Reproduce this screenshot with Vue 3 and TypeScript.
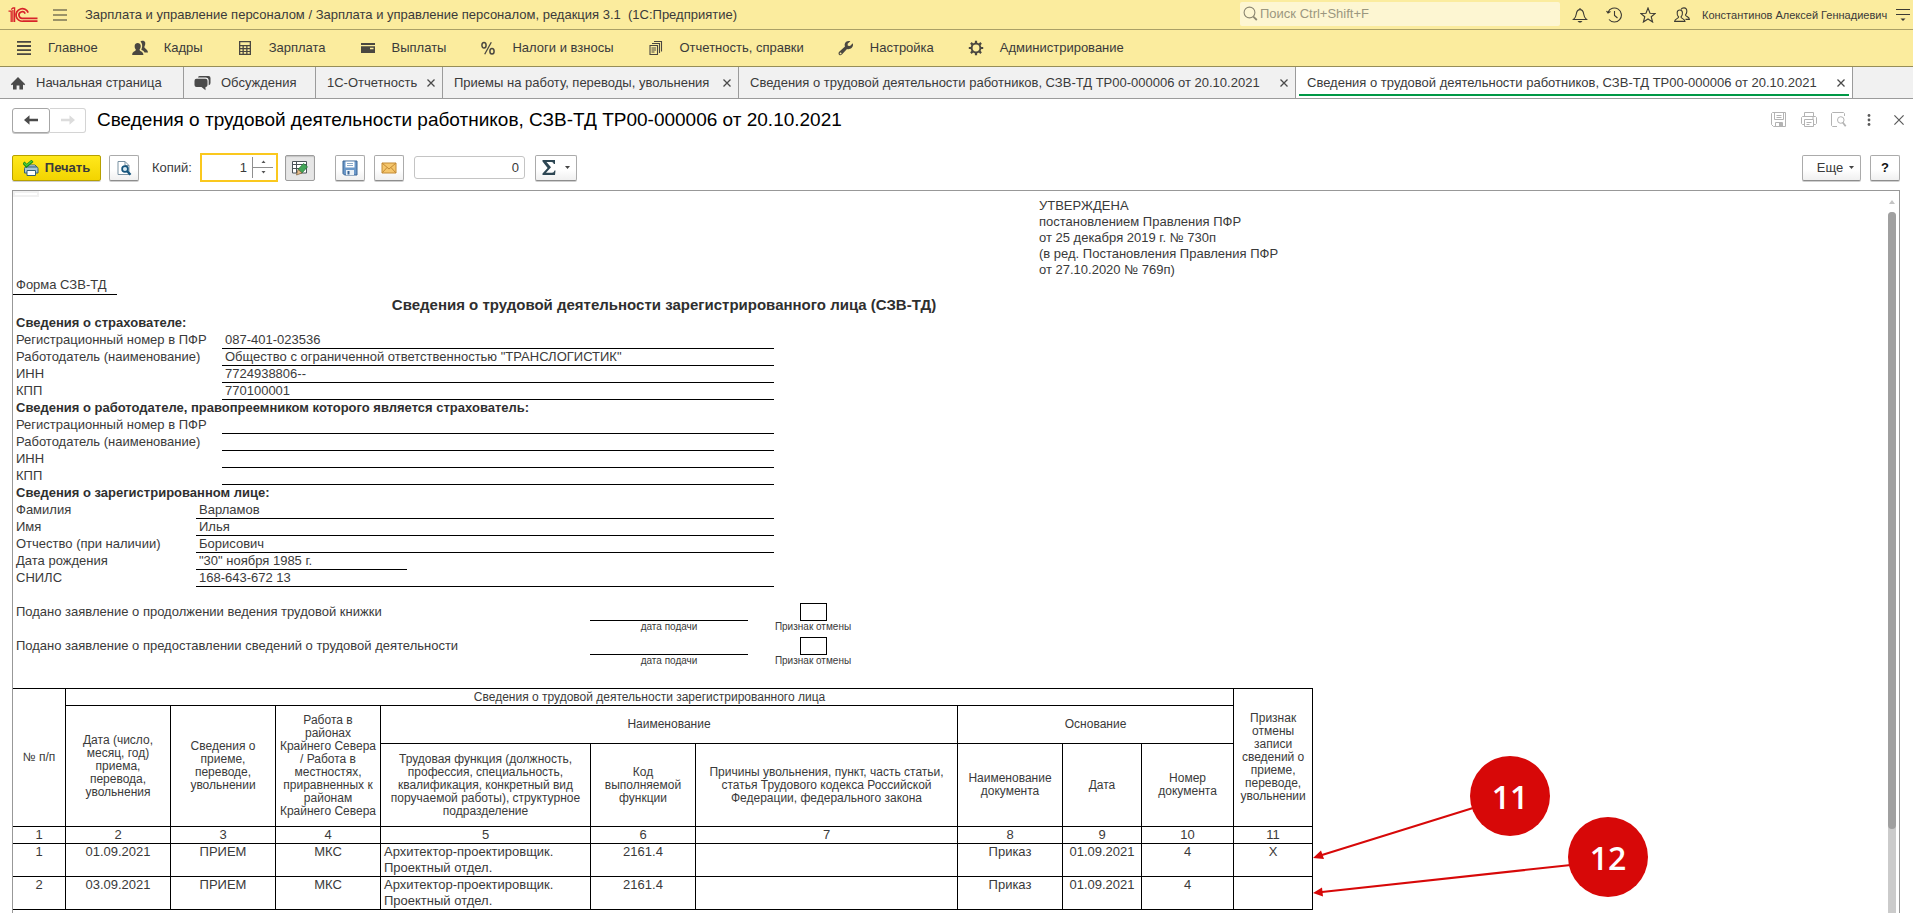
<script setup lang="ts">
interface Section { icon: string; label: string }
interface Field { label: string; value: string; short?: boolean }
interface Group { title: string; personal?: boolean; fields: Field[] }
interface Work {
  n: string; date: string; kind: string; north: string; job: string; code: string
  reason: string; doc: string; docDate: string; docNo: string; cancel: string
}

const sections: Section[] = [
  { icon: 'list', label: 'Главное' },
  { icon: 'people', label: 'Кадры' },
  { icon: 'calc', label: 'Зарплата' },
  { icon: 'wallet', label: 'Выплаты' },
  { icon: 'percent', label: 'Налоги и взносы' },
  { icon: 'papers', label: 'Отчетность, справки' },
  { icon: 'wrench', label: 'Настройка' },
  { icon: 'gear', label: 'Администрирование' },
]

const tabs: string[] = [
  '1С-Отчетность',
  'Приемы на работу, переводы, увольнения',
  'Сведения о трудовой деятельности работников, СЗВ-ТД ТР00-000006 от 20.10.2021',
  'Сведения о трудовой деятельности работников, СЗВ-ТД ТР00-000006 от 20.10.2021',
]

const approval: string[] = [
  'УТВЕРЖДЕНА',
  'постановлением Правления ПФР',
  'от 25 декабря 2019 г. № 730п',
  '(в ред. Постановления Правления ПФР',
  'от 27.10.2020 № 769п)',
]

const groups: Group[] = [
  {
    title: 'Сведения о страхователе:',
    fields: [
      { label: 'Регистрационный номер в ПФР', value: '087-401-023536' },
      { label: 'Работодатель (наименование)', value: 'Общество с ограниченной ответственностью "ТРАНСЛОГИСТИК"' },
      { label: 'ИНН', value: '7724938806--' },
      { label: 'КПП', value: '770100001' },
    ],
  },
  {
    title: 'Сведения о работодателе, правопреемником которого является страхователь:',
    fields: [
      { label: 'Регистрационный номер в ПФР', value: '' },
      { label: 'Работодатель (наименование)', value: '' },
      { label: 'ИНН', value: '' },
      { label: 'КПП', value: '' },
    ],
  },
  {
    title: 'Сведения о зарегистрированном лице:',
    personal: true,
    fields: [
      { label: 'Фамилия', value: 'Варламов' },
      { label: 'Имя', value: 'Илья' },
      { label: 'Отчество (при наличии)', value: 'Борисович' },
      { label: 'Дата рождения', value: '"30" ноября 1985 г.', short: true },
      { label: 'СНИЛС', value: '168-643-672 13' },
    ],
  },
]

const requests: string[] = [
  'Подано заявление о продолжении ведения трудовой книжки',
  'Подано заявление о предоставлении сведений о трудовой деятельности',
]

const works: Work[] = [
  { n: '1', date: '01.09.2021', kind: 'ПРИЕМ', north: 'МКС', job: 'Архитектор-проектировщик. Проектный отдел.', code: '2161.4', reason: '', doc: 'Приказ', docDate: '01.09.2021', docNo: '4', cancel: 'X' },
  { n: '2', date: '03.09.2021', kind: 'ПРИЕМ', north: 'МКС', job: 'Архитектор-проектировщик. Проектный отдел.', code: '2161.4', reason: '', doc: 'Приказ', docDate: '01.09.2021', docNo: '4', cancel: '' },
]
</script>

<template>
  <div class="app">
    <header class="titlebar">
      <svg class="logo" width="30" height="16" viewBox="0 0 30 16" fill="none" stroke="#d8232a" stroke-width="1.7">
        <path d="M0.5 4.2H3.2V15M3.2 2.4L5 1H6.6V15M4.9 3V15" stroke-width="1.3" />
        <path d="M20.2 5.6A6.3 6.3 0 1 0 15.2 14.2H29.5" />
        <path d="M17.2 6.6A3.3 3.3 0 1 0 15 11.3H29.5" />
      </svg>
      <button class="plain burger" aria-label="Главное меню">
        <svg width="14" height="12" viewBox="0 0 14 12" stroke="#3c3a33" stroke-width="1.2"><path d="M0 1H14M0 6H14M0 11H14" /></svg>
      </button>
      <span class="app-name">Зарплата и управление персоналом / Зарплата и управление персоналом, редакция 3.1&nbsp; (1С:Предприятие)</span>
      <label class="search">
        <svg width="15" height="15" viewBox="0 0 15 15" fill="none" stroke="#8b8671" stroke-width="1.1"><circle cx="6.5" cy="6.5" r="5.4" /><path d="M10.3 10.6L13.8 14" stroke-width="1.8" /></svg>
        <input type="text" aria-label="Поиск" placeholder="Поиск Ctrl+Shift+F" />
      </label>
      <div class="tools">
        <button class="plain" aria-label="Уведомления">
          <svg width="16" height="16" viewBox="0 0 16 16" fill="none" stroke="#3c3a33" stroke-width="1.1"><path d="M8 1V2.5M1.5 12.5H14.5C12.5 11 12 9.5 11.7 7C11.3 4 10 2.6 8 2.6S4.7 4 4.3 7C4 9.5 3.500 11 1.500 12.500Z" /><path d="M5.500 14H10.500L9 15.500H7Z" fill="#3c3a33" stroke="none" /></svg>
        </button>
        <button class="plain" aria-label="История">
          <svg width="16" height="16" viewBox="0 0 16 16" fill="none" stroke="#3c3a33" stroke-width="1.100"><path d="M2 5.200A7 7 0 1 1 3 12.500M0.500 4L2 6L4.500 4.600M8.500 4V8.500L11.500 11" /></svg>
        </button>
        <button class="plain" aria-label="Избранное">
          <svg width="16" height="16" viewBox="0 0 16 16" fill="none" stroke="#3c3a33" stroke-width="1.100"><path d="M8 1L10 6.200L15.300 6.400L11.200 9.700L12.600 15L8 12L3.400 15L4.800 9.700L0.700 6.400L6 6.200Z" /></svg>
        </button>
        <button class="plain" aria-label="Пользователи">
          <svg width="16" height="16" viewBox="0 0 16 16" fill="none" stroke="#3c3a33" stroke-width="1.100"><path d="M0.600 14.400C0.600 11.800 4.600 11.600 4.600 10C3.300 8.800 3 7 3.200 5.400C3.400 3.700 4.500 3 5.800 3S8.200 3.700 8.400 5.400C8.600 7 8.200 8.800 7 10C7 11.600 11 11.800 11 14.400Z" /><path d="M7 2.600C7.500 1.500 8.600 0.900 10 0.900C12 0.900 12.900 2.500 12.800 4.400C12.800 6 12.200 7 11.500 7.900C11.500 9.600 15.400 9.600 15.400 12.400H11.500" /></svg>
        </button>
      </div>
      <span class="user">Константинов Алексей Геннадиевич</span>
      <button class="plain" aria-label="Настройка окна">
        <svg width="14" height="14" viewBox="0 0 14 14" stroke="#3c3a33" stroke-width="1.200"><path d="M0 1.500H14M0 6.500H14" /><path d="M4.500 10.500H9.500L7 13Z" fill="#3c3a33" stroke="none" /></svg>
      </button>
    </header>

    <nav class="sections">
      <a v-for="s in sections" :key="s.label" href="#" class="section">
        <svg width="16" height="16" viewBox="0 0 16 16" fill="#4a4740">
          <path v-if="s.icon === 'list'" d="M1 1H15V2.800H1ZM1 5.100H15V6.900H1ZM1 9.200H15V11H1ZM1 13.200H15V15H1Z" />
          <g v-else-if="s.icon === 'people'">
            <path d="M8.500 1.600C9 0.500 12.700 0 13.200 2.500C13.500 4.500 12.800 6 12.300 6.900C12.300 8.600 16 9 16 12.600H12.500C12 11 10.500 10.300 9.300 9.700C10.400 7.800 10.800 4 8.500 1.600Z" />
            <path d="M0.200 15C0 11.500 3.800 11.300 3.900 9.800C2.900 8.800 2.500 7.200 2.700 5.600C2.900 3.700 4 2.900 5.700 2.900S8.500 3.700 8.700 5.600C8.900 7.200 8.400 8.800 7.500 9.800C7.600 11.300 11.400 11.500 11.400 15Z" />
          </g>
          <path v-else-if="s.icon === 'calc'" fill-rule="evenodd" d="M2 1H14V15H2ZM3.300 2.300V5H12.700V2.300ZM3.300 6.300V8H5.500V6.300ZM6.800 6.300V8H9.200V6.300ZM10.500 6.300V8H12.700V6.300ZM3.300 9.200V10.900H5.500V9.200ZM6.800 9.200V10.900H9.200V9.200ZM10.500 9.200V10.900H12.700V9.200ZM3.300 12.100V13.800H5.500V12.100ZM6.800 12.100V13.800H9.200V12.100ZM10.500 12.100V13.800H12.700V12.100Z" />
          <path v-else-if="s.icon === 'wallet'" fill-rule="evenodd" d="M1 3H15V5H1ZM1 6.200H15V13H1ZM10 7.800V9.300H13.500V7.800Z" />
          <g v-else-if="s.icon === 'percent'" fill="none" stroke="#4a4740"><ellipse cx="4" cy="5.200" rx="2.100" ry="2.800" stroke-width="1.500" /><ellipse cx="12" cy="11.300" rx="2.100" ry="2.800" stroke-width="1.500" /><path d="M11.300 2.200L4.700 14.300" stroke-width="1.300" /></g>
          <g v-else-if="s.icon === 'papers'" fill="none" stroke="#4a4740" stroke-width="1.100"><path d="M2 5.500H9.500V14.500H2ZM4 3.500H11.500V13M6 1.500H13.500V11.500M3.500 8H8M3.500 10H8M3.500 12H6.500" /></g>
          <path v-else-if="s.icon === 'wrench'" fill-rule="evenodd" d="M14.800 3.300L12 6L9.800 5.700L9.600 3.800L12.400 1.200C10 0.300 7 1.500 6.700 4.200C6.600 5.200 6.800 6 7 6.600L1.200 11.800C-0.700 13.900 1.800 16.400 3.900 14.600L9 8.900C12 9.900 16 7.500 14.800 3.300ZM2.600 12.500A0.900 0.900 0 1 1 2.600 14.300A0.900 0.900 0 1 1 2.600 12.500Z" />
          <g v-else fill="none" stroke="#4a4740"><circle cx="8" cy="8" r="4.400" stroke-width="2" /><path d="M8 0.800V3.200M8 12.800V15.200M0.800 8H3.200M12.800 8H15.200M2.900 2.900L4.600 4.600M11.400 11.400L13.100 13.100M2.900 13.100L4.600 11.400M11.400 4.600L13.100 2.900" stroke-width="2.200" /></g>
        </svg>
        <span>{{ s.label }}</span>
      </a>
    </nav>

    <nav class="tabs">
      <a href="#" class="tab home">
        <svg width="16" height="16" viewBox="0 0 16 16" fill="#4a4a4a"><path d="M8 2L0.800 9.300L1.800 10.200L3 9.500V14.500H6.600V10.500H9.400V14.500H13V9.500L14.200 10.200L15.200 9.300Z" /></svg>
        <span>Начальная страница</span>
      </a>
      <a href="#" class="tab home">
        <svg width="17" height="16" viewBox="0 0 17 16" fill="#4a4a4a"><path d="M5.500 1H14.500Q16.500 1 16.500 3V8Q16.500 10 14.700 10.200V5Q14.500 2.800 12 2.600H4Q4 1 5.500 1Z" /><path d="M2.500 3.700H11.500Q13.500 3.700 13.500 5.700V10Q13.500 12 11.500 12V15.300L7.500 12H2.500Q0.500 12 0.500 10V5.700Q0.500 3.700 2.500 3.700Z" /></svg>
        <span>Обсуждения</span>
      </a>
      <div v-for="(t, i) in tabs" :key="i" class="tab" :class="{ active: i === tabs.length - 1 }">
        <a href="#">{{ t }}</a>
        <button class="plain" aria-label="Закрыть вкладку">
          <svg width="8" height="8" viewBox="0 0 8 8" stroke="#4a4a4a" stroke-width="1.300"><path d="M0.500 0.500L7.500 7.500M7.500 0.500L0.500 7.500" /></svg>
        </button>
      </div>
    </nav>

    <div class="heading">
      <div class="nav-pair">
        <button aria-label="Назад"><svg width="14" height="10" viewBox="0 0 14 10" fill="#4a4a4a"><path d="M0 5L5.500 0.300V3.800H14V6.200H5.500V9.700Z" /></svg></button>
        <button aria-label="Вперед" disabled><svg width="14" height="10" viewBox="0 0 14 10" fill="#dcdcdc"><path d="M14 5L8.500 0.300V3.800H0V6.200H8.500V9.700Z" /></svg></button>
      </div>
      <h1>Сведения о трудовой деятельности работников, СЗВ-ТД ТР00-000006 от 20.10.2021</h1>
      <div class="window-tools">
        <button class="plain" aria-label="Сохранить"><svg width="16" height="16" viewBox="0 0 16 16" fill="none" stroke="#b3b3b3"><path d="M1.500 0.500H14.500V14.500H2.500L0.500 12.500V1.500ZM3.500 0.500V7.500H12.500V0.500M5.500 3.500H10.500M5.500 5.500H10.500M4.500 14.500V10.500H11.500V14.500" /><path d="M8 11H11V14H8Z" fill="#b3b3b3" stroke="none" /></svg></button>
        <button class="plain" aria-label="Печать"><svg width="16" height="16" viewBox="0 0 16 16" fill="none" stroke="#b3b3b3"><path d="M3.500 4.500V0.500H12.500V4.500M3.500 12.500H1.500L0.500 11.500V5.500L1.500 4.500H14.500L15.500 5.500V11.500L14.500 12.500H12.500M3.500 7.500H12.500V14.500H3.500ZM5.500 10.500H10.500M5.500 12.500H8.500M11 6H13" /></svg></button>
        <button class="plain" aria-label="Предварительный просмотр"><svg width="16" height="16" viewBox="0 0 16 16" fill="none" stroke="#b3b3b3"><path d="M6 14.500H1.500L0.500 13.500V1.500L1.500 0.500H12.500L13.500 1.500V4" /><circle cx="9.800" cy="8" r="3.300" /><path d="M11.800 10.500L14.700 14.200" stroke-width="1.800" /></svg></button>
        <button class="plain" aria-label="Действия"><svg width="4" height="12" viewBox="0 0 4 12" fill="#5a5a5a"><circle cx="2" cy="1.500" r="1.400" /><circle cx="2" cy="6" r="1.400" /><circle cx="2" cy="10.500" r="1.400" /></svg></button>
        <button class="plain" aria-label="Закрыть"><svg width="10" height="10" viewBox="0 0 10 10" stroke="#5a5a5a" stroke-width="1.200"><path d="M0.400 0.400L9.600 9.600M9.600 0.400L0.400 9.600" /></svg></button>
      </div>
    </div>

    <div class="toolbar">
      <button class="btn print">
        <svg width="16" height="16" viewBox="0 0 16 16"><path d="M4.500 5H12L14 7H3Z" fill="#fff" stroke="#35617a" /><path d="M1.500 8.500Q1.500 7 3 7H13.500Q15 7 15 8.500V13H1.500Z" fill="#a9c6d6" stroke="#35617a" /><path d="M4 10.500H12.500V15.500H4Z" fill="#fff" stroke="#35617a" /><path d="M0.500 2.500L3.500 6L9.500 0.800" fill="none" stroke="#1a8a1a" stroke-width="3" /><path d="M1 3L3.500 5.500L9 1" fill="none" stroke="#4fd03a" stroke-width="1.200" /></svg>
        <span>Печать</span>
      </button>
      <button class="btn square" aria-label="Просмотр">
        <svg width="16" height="16" viewBox="0 0 16 16" fill="none"><path d="M2 1.500H9L13 5.500V14.500H2Z" fill="#fff" stroke="#7b93a3" /><path d="M9 1.500V5.500H13" stroke="#7b93a3" /><circle cx="9" cy="9" r="2.900" fill="#d8eaf3" stroke="#15557d" stroke-width="1.700" /><path d="M11.200 11.200L14.500 14.800" stroke="#15557d" stroke-width="2.400" /></svg>
      </button>
      <label class="copies" for="copies">Копий:</label>
      <div class="spin">
        <input id="copies" type="text" value="1" />
        <div class="spin-buttons">
          <button class="plain" aria-label="Больше"><svg width="5" height="3" viewBox="0 0 5 3" fill="#555"><path d="M0.500 3L2.500 0.500L4.500 3Z" /></svg></button>
          <button class="plain" aria-label="Меньше"><svg width="5" height="3" viewBox="0 0 5 3" fill="#555"><path d="M0.500 0L2.500 2.500L4.500 0Z" /></svg></button>
        </div>
      </div>
      <button class="btn square pressed" aria-label="Редактирование">
        <svg width="18" height="16" viewBox="0 0 18 16" fill="none"><path d="M1.500 1.500H15.500V13H1.500Z" fill="#fff" stroke="#4b5358" /><path d="M1.500 4.500H15.500M1.500 8.500H15.500M5.500 1.500V13" stroke="#4b5358" /><path d="M7 9.500L12.500 3.500L16.500 6.800L11 13Z" fill="#43a558" stroke="#287a3c" stroke-width="0.800" /><path d="M7 9.500L11 13L5.500 15Z" fill="#e8c090" stroke="#7a5b35" stroke-width="0.700" /></svg>
      </button>
      <button class="btn square save" aria-label="Сохранить таблицу">
        <svg width="16" height="16" viewBox="0 0 16 16"><path d="M1 1H15V15H2.500L1 13.500Z" fill="#6b98c9" stroke="#3a6494" /><path d="M3.500 1.500H12.500V7.500H3.500Z" fill="#fff" /><path d="M5 3.500H11M5 5.500H11" stroke="#8ba9c8" /><path d="M4 10H12V15H4Z" fill="#e9f0f6" /><path d="M5.500 11H7.500V14.500H5.500Z" fill="#3a6494" /></svg>
      </button>
      <button class="btn square" aria-label="Отправить по почте">
        <svg width="16" height="12" viewBox="0 0 16 12" fill="none"><path d="M1 1H15V11H1Z" fill="#f5c66c" stroke="#c38a35" /><path d="M1 1L8 7L15 1M1 11L6 5.500M15 11L10 5.500" stroke="#c38a35" /></svg>
      </button>
      <input class="sum" type="text" value="0" aria-label="Сумма" />
      <button class="btn sigma" aria-label="Сумма ячеек">
        <svg width="14" height="15" viewBox="0 0 14 15" fill="#2d4653"><path d="M0.500 0H13V4H11.800Q11.500 2 9.500 2H4.500L9 7.300L4 12.700H10Q12 12.700 12.500 10.500H13.500L13 15H0.500V13.600L5.600 8L0.500 1.600Z" /></svg>
        <svg width="5" height="3" viewBox="0 0 5 3" fill="#444"><path d="M0 0H5L2.500 3Z" /></svg>
      </button>
      <button class="btn more">
        <span>Еще</span>
        <svg width="5" height="3" viewBox="0 0 5 3" fill="#444"><path d="M0 0H5L2.500 3Z" /></svg>
      </button>
      <button class="btn square help">?</button>
    </div>

    <main class="frame">
      <div class="sheet">
        <div class="sheet-top">
          <i class="cell-mark"></i>
          <div class="form-name">Форма СЗВ-ТД</div>
          <div class="approval"><div v-for="a in approval" :key="a">{{ a }}</div></div>
        </div>
        <h2>Сведения о трудовой деятельности зарегистрированного лица (СЗВ-ТД)</h2>

        <section v-for="g in groups" :key="g.title" class="group" :class="{ personal: g.personal }">
          <h3>{{ g.title }}</h3>
          <div v-for="f in g.fields" :key="f.label" class="field">
            <span>{{ f.label }}</span>
            <span class="value" :class="{ short: f.short }">{{ f.value }}</span>
          </div>
        </section>

        <div class="requests">
          <div v-for="(r, i) in requests" :key="r" class="request">
            <span class="request-name">{{ r }}</span>
            <div class="filed"><div class="line"></div><small>дата подачи</small></div>
            <div class="revoked">
              <input :id="'revoked-' + i" type="checkbox" />
              <label :for="'revoked-' + i">Признак отмены</label>
            </div>
          </div>
        </div>

        <div class="works">
          <table>
            <colgroup>
              <col class="c53" /><col class="c105" /><col class="c105" /><col class="c105" /><col class="c210" /><col class="c105" />
              <col class="c262" /><col class="c105" /><col class="c79" /><col class="c92" /><col class="c79" />
            </colgroup>
            <thead>
              <tr class="r17">
                <th rowspan="3">№ п/п</th>
                <th colspan="9">Сведения о трудовой деятельности зарегистрированного лица</th>
                <th rowspan="3">Признак отмены записи сведений о приеме, переводе, увольнении</th>
              </tr>
              <tr class="r38">
                <th rowspan="2">Дата (число, месяц, год) приема, перевода, увольнения</th>
                <th rowspan="2">Сведения о приеме, переводе, увольнении</th>
                <th rowspan="2">Работа в<br />районах<br />Крайнего Севера<br />/ Работа в местностях, приравненных к районам<br />Крайнего Севера</th>
                <th colspan="3">Наименование</th>
                <th colspan="3">Основание</th>
              </tr>
              <tr class="r83">
                <th>Трудовая функция (должность,<br />профессия, специальность,<br />квалификация, конкретный вид<br />поручаемой работы), структурное<br />подразделение</th>
                <th>Код<br />выполняемой<br />функции</th>
                <th>Причины увольнения, пункт, часть статьи, статья Трудового кодекса Российской Федерации, федерального закона</th>
                <th>Наименование документа</th>
                <th>Дата</th>
                <th>Номер документа</th>
              </tr>
            </thead>
            <tbody>
              <tr class="r17"><td v-for="n in 11" :key="n" class="num">{{ n }}</td></tr>
              <tr v-for="w in works" :key="w.n" class="r33">
                <td>{{ w.n }}</td><td>{{ w.date }}</td><td>{{ w.kind }}</td><td>{{ w.north }}</td>
                <td class="job">{{ w.job }}</td><td>{{ w.code }}</td><td>{{ w.reason }}</td><td>{{ w.doc }}</td>
                <td>{{ w.docDate }}</td><td>{{ w.docNo }}</td><td>{{ w.cancel }}</td>
              </tr>
            </tbody>
          </table>
          <svg class="callouts" width="340" height="160" viewBox="0 0 340 160">
            <g stroke="#d70808" stroke-width="2"><path d="M160 53L9 100M258 110L9 137" /></g>
            <g fill="#d70808"><path d="M0 103L8 95.500L11 104ZM0 138L9 132.500L10 141.500Z" /><circle cx="197" cy="41" r="40" /><circle cx="295" cy="102" r="40" /></g>
            <g fill="#fff" text-anchor="middle"><text x="197" y="54">11</text><text x="295" y="115">12</text></g>
          </svg>
        </div>
      </div>
      <div class="scrollbar">
        <svg width="6" height="4" viewBox="0 0 6 4" fill="#c4c4c4"><path d="M0 4L3 0L6 4Z" /></svg>
        <div class="track"><div class="thumb"></div></div>
      </div>
    </main>
  </div>
</template>

<style>
body { margin: 0; background: #fff; }
</style>

<style scoped>
.app {
  height: 100vh;
  display: flex;
  flex-direction: column;
  overflow: hidden;
  font-family: "Liberation Sans", Arial, sans-serif;
  font-size: 13px;
  line-height: 16px;
  color: #3a3a3a;
}
.app *, .app *::before { box-sizing: border-box; }
a { color: inherit; text-decoration: none; }
button, input { font: inherit; color: inherit; }
svg { display: block; flex: none; }
.plain { border: 0; background: none; padding: 0; display: flex; align-items: center; justify-content: center; }

.titlebar { flex: none; height: 30px; display: flex; align-items: center; background: #fbec9e; border-bottom: 1px solid #aaa066; padding: 0 3px 0 8px; white-space: nowrap; }
.burger { margin-left: 15px; }
.app-name { margin-left: 18px; }
.search { margin-left: auto; width: 320px; height: 24px; margin-bottom: 2px; display: flex; align-items: center; gap: 2px; padding-left: 3px; background: #fdf6d2; border-radius: 2px; }
.search input { flex: 1; min-width: 0; border: 0; padding: 0; background: none; outline: 0; }
.search input::placeholder { color: #9b977f; opacity: 1; }
.tools { display: flex; gap: 18px; margin-left: 12px; }
.user { margin: 0 14px 0 12px; font-size: 11px; width: 180px; }

.sections { flex: none; height: 37px; display: flex; align-items: center; gap: 34px; padding: 0 16px; background: #fbec9e; border-bottom: 1px solid #968d58; white-space: nowrap; }
.section { display: flex; align-items: center; gap: 16px; }

.tabs { flex: none; height: 32px; display: grid; grid-template-columns: 184px 132px 127px 296px 557px 557px; background: #f1f1f1; border-bottom: 1px solid #9b9b9b; white-space: nowrap; }
.tab { position: relative; display: flex; align-items: center; justify-content: space-between; padding: 0 7px 0 11px; border-right: 1px solid #9b9b9b; min-width: 0; }
.tab.home { justify-content: flex-start; gap: 10px; padding-left: 10px; }
.tab.active { background: #fff; }
.tab.active::before { content: ""; position: absolute; left: 3px; right: 3px; bottom: 2px; height: 2px; background: #009846; }

.heading { flex: none; height: 42px; display: flex; align-items: center; padding: 0 9px 0 12px; }
.nav-pair { display: flex; }
.nav-pair button { width: 38px; height: 25px; padding: 0; display: flex; align-items: center; justify-content: center; background: #fff; border: 1px solid #a6a6a6; border-radius: 3px; box-shadow: 0 1px 0 #c8c8c8; }
.nav-pair button:disabled { width: 36px; border-color: #d4d4d4; border-left: 0; border-radius: 0 3px 3px 0; box-shadow: none; }
h1 { margin: 0 0 0 11px; font-size: 19px; line-height: 22px; font-weight: normal; color: #000; white-space: nowrap; }
.window-tools { margin-left: auto; display: flex; align-items: center; gap: 14px; }
.window-tools button:nth-child(4) { margin-left: 6px; margin-right: 9px; }

.toolbar { flex: none; height: 49px; display: flex; align-items: center; padding: 4px 13px 0 12px; }
.toolbar > * { flex: none; }
.btn { height: 26px; padding: 0; display: flex; align-items: center; justify-content: center; background: linear-gradient(#fff 55%, #f0f0f0); border: 1px solid #ababab; border-bottom-color: #8d8d8d; border-radius: 2px; box-shadow: 0 1px 0 #cfcfcf; }
.square { width: 30px; margin-left: 9px; }
.print { width: 89px; gap: 6px; font-weight: bold; background: linear-gradient(#ffe81c, #f3d400); border-color: #b7a000; margin-right: -1px; }
.pressed { background: #e6e6e6; border-color: #9c9c9c; box-shadow: inset 0 1px 1px #c4c4c4; margin-left: 7px; }
.copies { margin-left: 13px; width: 48px; }
.spin { width: 78px; height: 29px; display: flex; align-items: center; border: 2px solid #fac81e; background: #fff; }
.spin input { flex: 1; min-width: 0; border: 0; padding: 0 5px; text-align: right; outline: 0; }
.spin-buttons { width: 24px; height: 21px; padding-right: 3px; display: grid; grid-template-rows: 1fr 1fr; border-left: 1px solid #8f8f8f; }
.spin-buttons button:first-child { border-bottom: 1px solid #8f8f8f; }
.save { margin-left: 20px; }
.sum { width: 111px; height: 23px; margin-left: 10px; padding: 0 5px; text-align: right; border: 1px solid #c4c4c4; border-radius: 3px; outline: 0; }
.sigma { width: 42px; gap: 9px; margin-left: 10px; }
.more { width: 59px; gap: 6px; margin-left: auto; padding-left: 8px; }
.help { font-weight: bold; color: #111; }

.frame { flex: 1; min-height: 0; margin: 0 13px 0 12px; display: flex; border: 1px solid #989898; border-bottom: 0; overflow: hidden; }
.sheet { flex: 1; min-width: 0; overflow: hidden; }
.sheet-top { position: relative; height: 104px; display: flex; align-items: flex-end; }
.cell-mark { position: absolute; left: 0; top: 0; width: 26px; height: 6px; border: 2px solid #f1f1f1; background: #fff; }
.form-name { width: 104px; height: 18px; padding-left: 3px; border-bottom: 1px solid #000; }
.approval { align-self: flex-start; margin: 7px 0 0 922px; line-height: 16px; white-space: nowrap; }
h2 { margin: 0; width: 1302px; height: 20px; line-height: 19px; font-size: 15px; text-align: center; color: #2f2f2f; }
h3 { margin: 0; height: 17px; line-height: 16px; padding-left: 3px; font-size: 13px; color: #2f2f2f; }
.field { display: grid; grid-template-columns: 209px 552px; height: 17px; line-height: 16px; white-space: nowrap; }
.personal .field { grid-template-columns: 183px 578px; }
.field > span { padding-left: 3px; }
.field .value { border-bottom: 1px solid #000; }
.field .short { width: 211px; }
.requests { margin: 17px 0 16px; }
.request { display: flex; height: 34px; }
.request-name { width: 577px; padding-left: 3px; }
.filed { width: 158px; text-align: center; }
.line { height: 17px; border-bottom: 1px solid #000; }
small, .revoked label { font-size: 10px; line-height: 12px; display: block; }
.revoked { width: 130px; display: flex; flex-direction: column; align-items: center; }
.revoked input { appearance: none; margin: -1px 0 0; width: 27px; height: 18px; flex: none; border: 1px solid #000; background: #fff; }

.works { position: relative; width: 1300px; }
table { table-layout: fixed; width: 1300px; border-collapse: separate; border-spacing: 0; border-top: 1px solid #000; }
th, td { border-right: 1px solid #000; border-bottom: 1px solid #000; padding: 0; text-align: center; font-weight: normal; overflow: hidden; }
th { font-size: 12px; line-height: 13px; }
td { vertical-align: top; line-height: 16px; }
td.job { text-align: left; padding-left: 3px; }
.r17 { height: 17px; } .r33 { height: 33px; } .r38 { height: 38px; } .r83 { height: 83px; }
.c53 { width: 53px; } .c79 { width: 79px; } .c92 { width: 92px; } .c105 { width: 105px; } .c210 { width: 210px; } .c262 { width: 262px; }
.callouts { position: absolute; left: 100%; top: 67px; }
.callouts text { font: 600 32px "Open Sans", "Noto Sans", sans-serif; }

.scrollbar { flex: none; width: 14px; display: flex; flex-direction: column; align-items: center; padding: 9px 3px 0; gap: 8px; }
.track { flex: 1; width: 8px; background: #cbcbcb; border-radius: 4px 4px 0 0; }
.thumb { height: 88%; background: #a0a0a0; border-radius: 4px; }
</style>
